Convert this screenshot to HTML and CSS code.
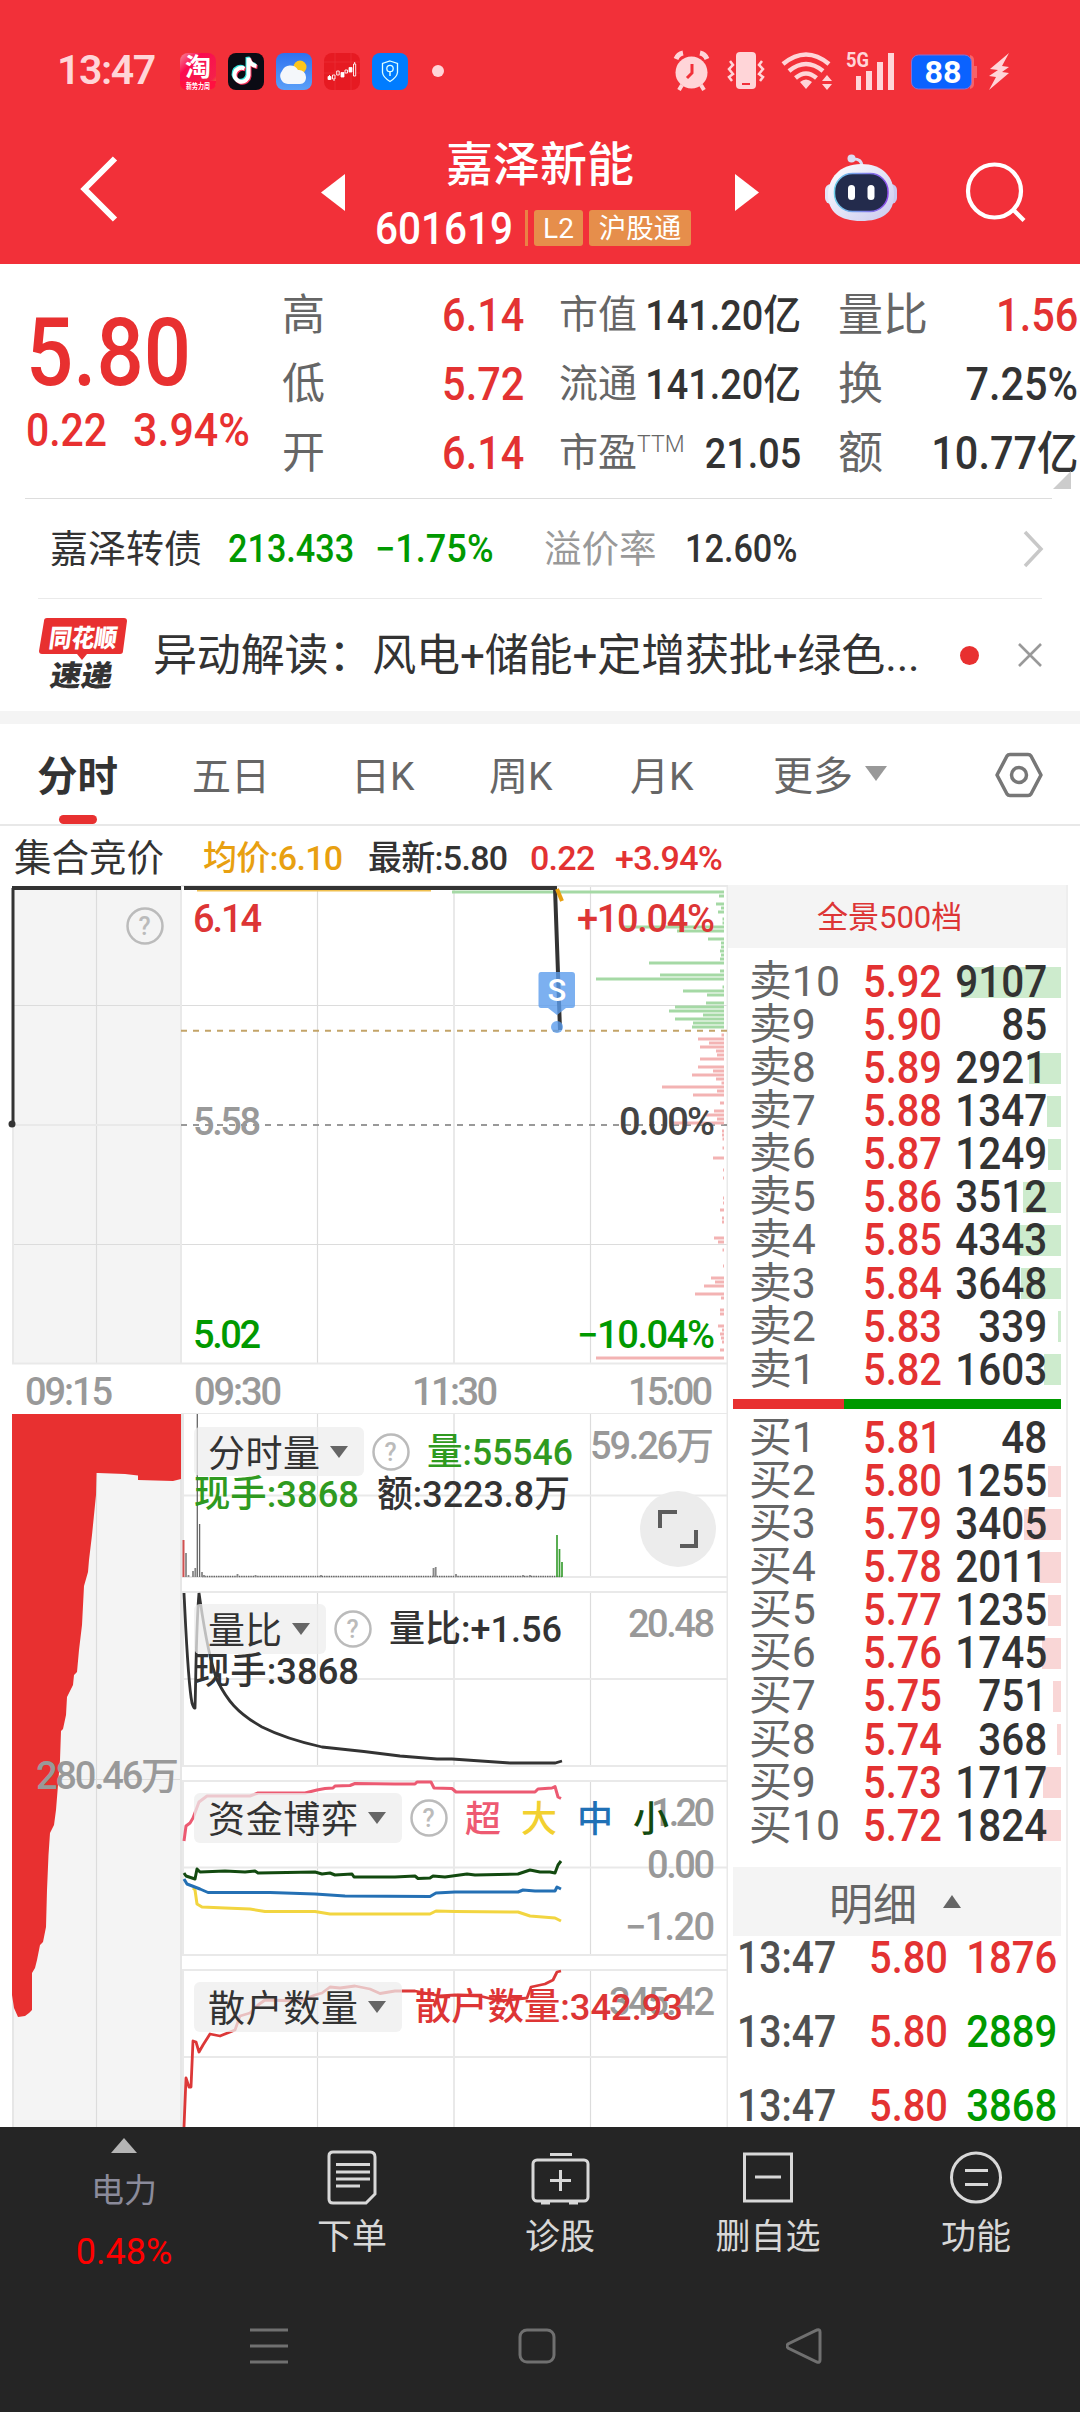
FILE: index.html
```html
<!DOCTYPE html>
<html lang="zh-CN">
<head>
<meta charset="utf-8">
<title>嘉泽新能 601619</title>
<link rel="stylesheet" href="styles.css">
</head>
<body>
<header class="top">
  <div class="status">
    <span class="clock">13:47</span>
    <div class="apps">
      <svg width="36" height="37" viewBox="0 0 36 37">
        <defs><linearGradient id="tb" x1="0" y1="0" x2="1" y2="1"><stop offset="0" stop-color="#f58a9a"/><stop offset=".3" stop-color="#fb0a50"/><stop offset=".8" stop-color="#f5204a"/><stop offset="1" stop-color="#e9a030"/></linearGradient></defs>
        <rect width="36" height="37" rx="8" fill="url(#tb)"/>
        <path d="M0 28h36v1q0 8-8 8H8q-8 0-8-8z" fill="#ff1040"/>
        <text x="5" y="23" font-size="25" font-weight="700" fill="#fff" textLength="26" lengthAdjust="spacingAndGlyphs">淘</text>
        <text x="6" y="35.500" font-size="8" font-weight="700" fill="#fff" textLength="24" lengthAdjust="spacingAndGlyphs">新势力周</text>
      </svg>
      <svg width="36" height="37" viewBox="0 0 36 37">
        <rect width="36" height="37" rx="8" fill="#0b0b14"/>
        <path d="M17.500 15.500a7 7 0 1 0 4 7V5c1 5 4 7.500 8 8" fill="none" stroke="#35e6e0" stroke-width="4" transform="translate(-2 -1)"/>
        <path d="M17.500 15.500a7 7 0 1 0 4 7V5c1 5 4 7.500 8 8" fill="none" stroke="#f8305a" stroke-width="4" transform="translate(0 1)"/>
        <path d="M17.500 15.500a7 7 0 1 0 4 7V5c1 5 4 7.500 8 8" fill="none" stroke="#fff" stroke-width="4" transform="translate(-1 0)"/>
      </svg>
      <svg width="36" height="37" viewBox="0 0 36 37">
        <defs><linearGradient id="sky" x1="0" y1="0" x2="0" y2="1"><stop offset="0" stop-color="#2f72f0"/><stop offset="1" stop-color="#5ba0f8"/></linearGradient></defs>
        <rect width="36" height="37" rx="8" fill="url(#sky)"/>
        <circle cx="24" cy="14" r="6.500" fill="#fdc51c"/>
        <path d="M12 31a8 8 0 0 1-6-13 9 9 0 0 1 16-1 7 7 0 0 1 8 7c0 4-2 7-6 7z" fill="#f4f7fb"/>
      </svg>
      <svg width="36" height="37" viewBox="0 0 36 37">
        <rect width="36" height="37" rx="8" fill="#e61a22"/>
        <path d="M11 0v37M27 0v37M0 9h36M0 20h36" stroke="#ea3236" stroke-width=".7"/>
        <path d="M4 23.500h3v3H4zM17 19.500h3v4.500h-3zM25 14.500h3v4.500h-3z" fill="#fff" stroke="#fff" stroke-width=".8"/>
        <path d="M8.500 22h2.500v4h-2.500zM12.700 18h2.500v4h-2.500zM21 17h2.500v3H21zM29.500 11h2.200v12h-2.200zM10 26.500v1.500M30.700 9v2M5.500 22v5" fill="none" stroke="#fff" stroke-width=".9"/>
      </svg>
      <svg width="36" height="37" viewBox="0 0 36 37">
        <rect width="36" height="37" rx="8" fill="#007cff"/>
        <path d="M18 8l7.500 2.500v9Q25 24 18 28.500 11 24 10.500 19.500v-9z" fill="none" stroke="#dff" stroke-width="1.300"/>
        <circle cx="18" cy="15.500" r="3.200" fill="none" stroke="#dff" stroke-width="1.300"/><path d="M18 19v4" stroke="#dff" stroke-width="1.500"/>
      </svg>
    </div>
    <i class="more-dot"></i>
    <svg class="sys" width="346" height="48" viewBox="670 48 346 48" fill="#ffd5d8">
      <circle cx="691.500" cy="73.500" r="16"/><path d="M682 86l-3 5M701 86l3 5" stroke="#ffd5d8" stroke-width="4"/>
      <path d="M676 60q2-5 7-6M707 60q-2-5-7-6" fill="none" stroke="#ffd5d8" stroke-width="5"/>
      <path d="M692 65v9l-5 5" fill="none" stroke="#f23039" stroke-width="3"/>
      <rect x="736" y="53" width="20" height="37" rx="4"/><path d="M742 85h8" stroke="#f23039" stroke-width="2"/>
      <path d="M730 62l3 4-4 4 4 5-4 3 3 4M762 62l-3 4 4 4-4 5 4 3-3 4" fill="none" stroke="#ffd5d8" stroke-width="2.500"/>
      <g fill="none" stroke="#ffd5d8" stroke-width="4.500"><path d="M783 65q23-19 46 0"/><path d="M789 72q17-14 34 0"/><path d="M795.500 79q10.500-9 21 0"/></g>
      <path d="M806 90l-6-7q6-5 12 0zM822 82l5-6 5 6zM822 85l5 6 5-6z"/>
      <text x="846" y="68" font-size="21" font-weight="700" textLength="23" lengthAdjust="spacingAndGlyphs">5G</text>
      <path d="M856 77h5v14h-5zM866 72h6v19h-6zM877 63h6v28h-6zM888 54h6v37h-6z"/>
      <path d="M970 56q4 1 4 5v6h3v12h-3v6q0 4-4 5z" fill="#f76268"/>
      <rect x="911.500" y="56" width="60" height="34" rx="7" fill="#0a62ff" stroke="#8a6fd0" stroke-width="1"/>
      <text x="924.500" y="84" font-size="31" font-weight="700" fill="#fff" textLength="37" lengthAdjust="spacingAndGlyphs">88</text>
      <path d="M1009 54l-19 16 8 1-9 6 7 1-7 13 20-17-7-1 7-5-7-1z"/>
    </svg>
  </div>
  <div class="nav">
    <svg class="back" width="38" height="68" viewBox="80 160 38 68"><path d="M115 163.500L84.500 194l30.500 30.500" fill="none" stroke="#fff" stroke-width="6"/></svg>
    <svg class="tri" width="24" height="37" viewBox="0 0 24 37"><path d="M24 0v37L0 18.500z" fill="#fff"/></svg>
    <div class="title">
      <h1>嘉泽新能</h1>
      <div class="code"><span class="num code-n">601619</span><i></i><b>L2</b><b class="hgt">沪股通</b></div>
    </div>
    <svg class="tri" width="24" height="37" viewBox="0 0 24 37"><path d="M0 0v37l24-18.500z" fill="#fff"/></svg>
    <svg class="robot" width="74" height="70" viewBox="824 159 74 70">
      <defs><linearGradient id="rb" x1="0" y1="0" x2="1" y2="1"><stop offset="0" stop-color="#fff"/><stop offset="1" stop-color="#c9c9ee"/></linearGradient><linearGradient id="rf" x1="0" y1="0" x2="1" y2="0"><stop offset="0" stop-color="#6fd0ea"/><stop offset="1" stop-color="#8a4ae8"/></linearGradient></defs>
      <path d="M852 165q10-1 10 8" fill="none" stroke="#dcdcf2" stroke-width="3"/><circle cx="851.500" cy="164.500" r="4" fill="#dcdcf2"/>
      <rect x="825" y="190" width="12" height="20" rx="6" fill="#e4e4f6"/><rect x="885" y="190" width="12" height="20" rx="6" fill="#c9c9ee"/>
      <path d="M861 170c22 0 33 13 33 31s-12 26-33 26-33-9-33-26 12-31 33-31z" fill="url(#rb)"/>
      <rect x="834.500" y="179.500" width="53.500" height="38" rx="18" fill="#232b4c" stroke="url(#rf)" stroke-width="1.500"/>
      <rect x="848" y="191" width="7" height="15" rx="3.500" fill="#fff"/><rect x="867.500" y="191" width="7" height="15" rx="3.500" fill="#fff"/>
    </svg>
    <svg class="search" width="62" height="64" viewBox="964 164 62 64" fill="none" stroke="#fff" stroke-width="4.200"><circle cx="994.500" cy="195" r="26.500"/><path d="M1013 213.500l11 11"/></svg>
  </div>
</header>

<section class="quote">
  <div class="price"><div class="num last">5.80</div><div class="chg"><span class="num">0.22</span><span class="num">3.94%</span></div></div>
  <dl class="c1">
    <dt>高</dt><dd class="num red">6.14</dd>
    <dt>低</dt><dd class="num red">5.72</dd>
    <dt>开</dt><dd class="num red">6.14</dd>
  </dl>
  <dl class="c2">
    <dt>市值</dt><dd class="num">141.20亿</dd>
    <dt>流通</dt><dd class="num">141.20亿</dd>
    <dt class="pe">市盈<sup>TTM</sup></dt><dd class="num">21.05</dd>
  </dl>
  <dl class="c3">
    <dt>量比</dt><dd class="num red">1.56</dd>
    <dt>换</dt><dd class="num">7.25%</dd>
    <dt>额</dt><dd class="num">10.77亿</dd>
  </dl>
  <i class="corner"></i>
</section>

<section class="bond">
  <span class="b-name">嘉泽转债</span><span class="num green b-px">213.433</span><span class="num green b-pc">−1.75%</span><span class="b-lab">溢价率</span><span class="num b-prem">12.60%</span>
  <svg width="22" height="40" viewBox="0 0 22 40"><path d="M2 3l16 17L2 37" fill="none" stroke="#c8c8c8" stroke-width="3.500"/></svg>
</section>

<section class="news">
  <svg class="logo" width="90" height="74" viewBox="38 616 90 74">
    <path d="M47 618h77q3 0 3 3l-4 30q0 3-3 3H87l-5 6-5-6H42q-3 0-3-3l5-30q0-3 3-3z" fill="#e83030"/>
    <text transform="translate(48 647) skewX(-8)" font-size="25" font-weight="900" fill="#fff" textLength="68" lengthAdjust="spacingAndGlyphs">同花顺</text>
    <text transform="translate(49 686) skewX(-10)" font-size="29" font-weight="900" fill="#333" textLength="62" lengthAdjust="spacingAndGlyphs">速递</text>
  </svg>
  <p>异动解读：风电+储能+定增获批+绿色...</p>
  <i class="dot"></i>
  <svg width="24" height="24" viewBox="0 0 24 24"><path d="M1 1l22 22M23 1L1 23" stroke="#999" stroke-width="2.600"/></svg>
</section>

<nav class="tabs">
  <span class="on">分时</span><span>五日</span><span>日K</span><span>周K</span><span>月K</span><span class="moretab">更多<i></i></span>
  <svg width="50" height="46" viewBox="993 751 50 46" fill="none" stroke="#777" stroke-width="3.500" stroke-linejoin="round"><path d="M996 774l10-19q1-1.500 3-1.500h18q2 0 3 1.500l10 19-10 19q-1 1.500-3 1.500h-18q-2 0-3-1.500z"/><circle cx="1018" cy="774" r="7.500"/></svg>
</nav>

<main class="board">
  <div class="charts">
    <div class="info"><span class="auc">集合竞价</span><span class="avg">均价:6.10</span><span class="new">最新:5.80</span><span class="red dv">0.22</span><span class="red">+3.94%</span></div>
    <svg class="g price-chart" width="728" height="529" viewBox="0 885 728 529">
      <path d="M12 886h169v478H12z" fill="#f4f4f4"/>
      <g fill="none" stroke="#dcdcdc" stroke-width="1.200"><path d="M96.500 886v477M317.500 886v477M590.500 886v477M12 1005.500h716M12 1244.500h716"/></g>
      <g fill="none" stroke="#e9e9e9" stroke-width="2"><path d="M13 886v477M181 886v477M454 886v477M12 1363.500h716M181 1414h547M12 1125h170M727.500 885v529M181 886h547"/></g>
      <path d="M197 890.500h234" stroke="#f0c050" stroke-width="2"/>
      <path d="M181 1030.700h547" stroke="#c3a468" stroke-width="2" stroke-dasharray="6 6"/>
      <path d="M181 1125h547" stroke="#999" stroke-width="2" stroke-dasharray="6 6"/>
      <path stroke="#a5d9a5" stroke-width="3.200" d="M452 892H724M719 896H724M716 904H724M721 908H724M718 912H724M722.500 919H724M722.500 923H724M624 927H724M677 931H724M708 939H724M721 943H724M721 947H724M720 951H724M721 955H724M720 959H724M649 963H724M720 971H724M660 975H724M596 979H724M722.500 987H724M683 991H724M707 995H724M706 1003H724M675 1007H724M669 1011H724M703 1015H724M675 1019H724M693 1023H724M692 1027H724"/>
      <path stroke="#f3b3b3" stroke-width="3.200" d="M721.500 1035H724M698 1039H724M709 1043H724M700 1047H724M716 1051H724M717 1055H724M700 1059H724M698 1067H724M713 1071H724M692 1075H724M716 1079H724M721.500 1083H724M662 1087H724M717 1091H724M693 1095H724M720 1103H724M714 1111H724M706 1115H724M717 1119H724M673 1123H724M722 1131H724M722 1135H724M722.500 1139H724M722.500 1148H724M713 1158H724M723 1170H724M723 1178H724M723 1198H724M723 1203H724M720 1210H724M722 1218H724M722 1222H724M714 1238H724M718 1242H724M722.500 1250H724M723 1266H724M711 1278H724M715 1282H724M704 1286H724M695 1294H724M721 1298H724M720 1310H724M720 1314H724M718 1326H724M722 1330H724M720 1334H724M721 1338H724M722 1342H724M720 1350H724M596 1358H724"/>
      <path d="M12 888h169M184 888h371l5 142" fill="none" stroke="#333" stroke-width="4"/>
      <path d="M13 888v236" stroke="#333" stroke-width="3"/><circle cx="12" cy="1124" r="3.500" fill="#333"/>
      <path d="M557 889l5 12" stroke="#e8a010" stroke-width="4"/>
      <g fill="#5b9cec" fill-opacity=".8"><path d="M541 972h31q3 0 3 3v30q0 3-3 3h-6l-9 7-9-7h-7q-2.500 0-2.500-3v-30q0-3 2.500-3z"/><circle cx="557" cy="1027" r="6"/></g>
      <text x="547.500" y="1001" font-size="31" fill="#fff">S</text>
      <circle cx="145" cy="926" r="17.500" fill="none" stroke="#bbb" stroke-width="2.500"/><text x="138.500" y="935" font-size="25" fill="#bbb">?</text>
      <g class="ax">
        <text x="193" y="932" textLength="69" fill="#dd3535">6.14</text><text x="193" y="1134.500" textLength="68" fill="#999">5.58</text><text x="193" y="1347.500" textLength="68" fill="#090">5.02</text>
        <text x="577" y="931.500" textLength="138" fill="#dd3535">+10.04%</text><text x="619" y="1134.500" textLength="96" fill="#444">0.00%</text><text x="577" y="1347.500" textLength="138" fill="#090">−10.04%</text>
        <g fill="#999"><text x="25" y="1404.500" textLength="88">09:15</text><text x="194" y="1404.500" textLength="88">09:30</text><text x="412" y="1404.500" textLength="86">11:30</text><text x="628" y="1404.500" textLength="85">15:00</text></g>
      </g>
    </svg>
    <div class="subs">
      <svg class="g" width="182" height="713" viewBox="0 1414 182 713">
        <path d="M12 1414h169v713H12z" fill="#f4f4f4"/>
        <path d="M96.500 1414v713M12 1779.500h169" stroke="#dcdcdc" stroke-width="1.200"/><path d="M13 1414v713M181 1414v713" stroke="#e6e6e6" stroke-width="2"/>
        <path d="M12 1414H181V1479L173 1481 138 1480V1475.500L125 1474 98 1473H96.500L96 1495 92 1535 89 1560 88 1572 84 1586 82 1625 79 1650 77 1672 74 1675 73 1685 67 1697 66 1715 63 1729 61 1731 60 1760 58 1785 56 1810 54 1825 50 1833 48.500 1855 47 1890 46 1927 43 1942 40 1945 37 1960 35 1968 32 1973V2010L29 2013 25 2016 18 2017 14 2008 12 1995Z" fill="#e83030"/>
        <text class="ax" x="36" y="1788.500" textLength="143" fill="#999">280.46万</text>
      </svg>
      <div class="stack">
      <svg class="g" width="546" height="177" viewBox="182 1414 546 177">
        <path d="M317.500 1414v163M590.500 1414v163" stroke="#dcdcdc" stroke-width="1.200"/><path d="M454 1414v163M183 1414v163M727.500 1414v177M182 1495.500h546M182 1577h546" stroke="#e9e9e9" stroke-width="2"/>
        <path d="M202 1576.500h360" stroke="#666" stroke-width="1.500" stroke-dasharray="1.500 .8"/>
        <path d="M183.500 1540v37" stroke="#d05050" stroke-width="2"/>
        <path d="M186 1553v24M188.500 1575v2M193 1571v6M195.300 1568v9M202 1572v5M204 1575v2M237.500 1574v3M255.500 1575v2M321 1575v2M433.500 1568v9M435.700 1567v10M456 1574v3M523 1575v2M530 1575v2" stroke="#888" stroke-width="1.800"/>
        <path d="M197.300 1414v163M199.600 1524v53" stroke="#666" stroke-width="1.300"/>
        <path d="M557 1535v42M559.500 1549v28M562 1562v15" stroke="#3da035" stroke-width="1.700"/>
        <rect class="pill" x="194" y="1427" width="170" height="49" rx="6"/><text class="lb" x="208" y="1467" textLength="112">分时量</text><path class="dn" d="M330 1446h18l-9 12z"/>
        <circle class="q" cx="391" cy="1452" r="17.500"/><text class="qt" x="384.500" y="1461">?</text>
        <text class="lb v grn" x="427" y="1465" textLength="146" lengthAdjust="spacingAndGlyphs">量:55546</text><text class="lb v grn" x="194" y="1507" textLength="165" lengthAdjust="spacingAndGlyphs">现手:3868</text><text class="lb v" x="377" y="1507" textLength="193" lengthAdjust="spacingAndGlyphs">额:3223.8万</text>
        <text class="ax" x="590" y="1459" textLength="124" fill="#999">59.26万</text>
        <circle cx="678" cy="1529" r="38" fill="#ececec"/><path d="M660 1528v-16h17M680 1546h16v-16" fill="none" stroke="#5c5c5c" stroke-width="4"/>
      </svg>
      <svg class="g" width="546" height="189" viewBox="182 1591 546 189">
        <path d="M317.500 1591v175M590.500 1591v175" stroke="#dcdcdc" stroke-width="1.200"/><path d="M454 1591v175M183 1591v175M727.500 1591v189M182 1592h546M182 1679h546M182 1766h546" stroke="#e9e9e9" stroke-width="2"/>
        <path d="M184 1593c2 40 4 90 8 110q2 6 3 5c1-30 1-80 4-115 3 20 8 60 18 87 10 20 20 33 45 47q24 12 60 20 40 4 78 9l37 3h15l58 4h45l7-2" fill="none" stroke="#333" stroke-width="2.800"/>
        <rect class="pill" x="194" y="1604" width="132" height="50" rx="6"/><text class="lb" x="208" y="1644" textLength="74">量比</text><path class="dn" d="M292 1623h18l-9 12z"/>
        <circle class="q" cx="353" cy="1629" r="17.500"/><text class="qt" x="346.500" y="1638">?</text>
        <text class="lb v" x="389" y="1642" textLength="173" lengthAdjust="spacingAndGlyphs">量比:+1.56</text><text class="lb v" x="194" y="1684" textLength="165" lengthAdjust="spacingAndGlyphs">现手:3868</text>
        <text class="ax" x="628" y="1636.500" textLength="87" fill="#999">20.48</text>
      </svg>
      <svg class="g" width="546" height="189" viewBox="182 1780 546 189">
        <path d="M317.500 1780v175M590.500 1780v175" stroke="#dcdcdc" stroke-width="1.200"/><path d="M454 1780v175M183 1780v175M727.500 1780v189M182 1781h546M182 1867.500h546M182 1955h546" stroke="#e9e9e9" stroke-width="2"/>
        <g class="ax" fill="#999"><text x="651" y="1825.500" textLength="64">1.20</text><text x="647" y="1877.500" textLength="68">0.00</text><text x="625" y="1939.500" textLength="90">−1.20</text></g>
        <g fill="none" stroke-width="3" stroke-linejoin="round">
          <path stroke="#ec5a72" d="M184 1841l2-15 4-3 3-5 6-16 8-6h43l8-3h47l12-3 8-1.500 8-.5 2-2 15-.5 5-2 40 .5h20l2-2h14l3 6 18 .5 4 3.500h79l3-3 14-1 3-1.500 3 10.500 3 1.500"/>
          <path stroke="#f2d540" d="M193 1888l2 2 2 14 5 3 23 1 25 1 15 2.500h50l15 2.500h100l6-3 19 .5 63 .5 12 4 25 2 6 3"/>
          <path stroke="#2470b4" d="M184 1879l3 5 13 5 8 3.500h62l45 1.500 30 2 85 .5 6-3.500 19-1h63l5-2 12 1h20l2-4 4 2"/>
          <path stroke="#134a10" d="M184 1873l2 3 9 3 2-10 3 3 25-1 20 1 10-1 3 2 57-1 7 2 8-1 5 2 17-1 2 3h41l20-1 3 2.500 12-.5 3-2 12 1 22-3 8 1 43-1 12-4 10 2h10l5 1 3-8 3-4"/>
        </g>
        <rect class="pill" x="194" y="1793" width="208" height="50" rx="6"/><text class="lb" x="208" y="1833" textLength="150">资金博弈</text><path class="dn" d="M368 1812h18l-9 12z"/>
        <circle class="q" cx="429" cy="1818" r="17.500"/><text class="qt" x="422.500" y="1827">?</text>
        <g class="cat"><text x="465" y="1831.500" fill="#ee5a72">超</text><text x="521" y="1831.500" fill="#f2d030">大</text><text x="577" y="1831.500" fill="#2070b5">中</text><text x="633" y="1831.500" fill="#134a10">小</text></g>
      </svg>
      <svg class="g" width="546" height="158" viewBox="182 1969 546 158">
        <path d="M317.500 1969v158M590.500 1969v158" stroke="#dcdcdc" stroke-width="1.200"/><path d="M454 1969v158M183 1969v158M727.500 1969v158M182 1970h546M182 2057h546" stroke="#e9e9e9" stroke-width="2"/>
        <path fill="none" stroke="#dc3838" stroke-width="2.800" stroke-linejoin="round" d="M184 2127l2-49 3 9h2l2-46 3 1 3 10 4-7 7-11 10 2 15-6 5-14 10-3 8-8 7-5 35 1 15-6 7-2 8-6 10 1 15-2 15 3 10 4.500 15-2.500h20l25 5 15-1 25 1 20 5 27-3 4-11 14-3 8-4 4-8 4-1"/>
        <text class="ax" x="609" y="2014.500" textLength="106" fill="#999">345.42</text>
        <rect class="pill" x="194" y="1982" width="208" height="50" rx="6"/><text class="lb" x="208" y="2022" textLength="150">散户数量</text><path class="dn" d="M368 2001h18l-9 12z"/>
        <text class="lb v retail" x="415" y="2020" textLength="268" lengthAdjust="spacingAndGlyphs">散户数量:342.93</text>
      </svg>
      </div>
    </div>
  </div>

  <aside class="book">
    <div class="full">全景500档</div>
    <ol class="sell">
      <li><span>卖10</span><b>5.92</b><i style="width:100px"></i><em>9107</em></li>
      <li><span>卖9</span><b>5.90</b><i style="width:0px"></i><em>85</em></li>
      <li><span>卖8</span><b>5.89</b><i style="width:32px"></i><em>2921</em></li>
      <li><span>卖7</span><b>5.88</b><i style="width:14px"></i><em>1347</em></li>
      <li><span>卖6</span><b>5.87</b><i style="width:13px"></i><em>1249</em></li>
      <li><span>卖5</span><b>5.86</b><i style="width:38px"></i><em>3512</em></li>
      <li><span>卖4</span><b>5.85</b><i style="width:47px"></i><em>4343</em></li>
      <li><span>卖3</span><b>5.84</b><i style="width:40px"></i><em>3648</em></li>
      <li><span>卖2</span><b>5.83</b><i style="width:3px"></i><em>339</em></li>
      <li><span>卖1</span><b>5.82</b><i style="width:17px"></i><em>1603</em></li>
    </ol>
    <div class="ratio"></div>
    <ol class="buy">
      <li><span>买1</span><b>5.81</b><i style="width:0px"></i><em>48</em></li>
      <li><span>买2</span><b>5.80</b><i style="width:13px"></i><em>1255</em></li>
      <li><span>买3</span><b>5.79</b><i style="width:37px"></i><em>3405</em></li>
      <li><span>买4</span><b>5.78</b><i style="width:22px"></i><em>2011</em></li>
      <li><span>买5</span><b>5.77</b><i style="width:13px"></i><em>1235</em></li>
      <li><span>买6</span><b>5.76</b><i style="width:19px"></i><em>1745</em></li>
      <li><span>买7</span><b>5.75</b><i style="width:8px"></i><em>751</em></li>
      <li><span>买8</span><b>5.74</b><i style="width:4px"></i><em>368</em></li>
      <li><span>买9</span><b>5.73</b><i style="width:18px"></i><em>1717</em></li>
      <li><span>买10</span><b>5.72</b><i style="width:20px"></i><em>1824</em></li>
    </ol>
    <div class="detail">明细<i></i></div>
    <ol class="ticks">
      <li><span>13:47</span><b>5.80</b><em class="up">1876</em></li>
      <li><span>13:47</span><b>5.80</b><em>2889</em></li>
      <li><span>13:47</span><b>5.80</b><em>3868</em></li>
    </ol>
  </aside>
</main>

<footer>
  <div class="acts">
    <div class="sector"><i></i><span>电力</span><strong>0.48%</strong></div>
    <div><svg width="60" height="56" viewBox="322 2149 60 56"><path d="M333 2152h37q5 0 5 5v37l-9 9h-33q-4 0-4-4v-43q0-4 4-4z"/><path d="M336 2164.500h34M336 2172h34M336 2179h34M336 2186h24"/></svg><span>下单</span></div>
    <div><svg width="60" height="56" viewBox="529 2149 60 56"><rect x="532" y="2160" width="55" height="41" rx="4"/><path d="M549 2154.500h22M559.500 2170v21M549 2180.500h21M540 2203h9M568 2203h9"/></svg><span>诊股</span></div>
    <div><svg width="60" height="56" viewBox="737 2149 60 56"><rect x="743.500" y="2154" width="47" height="47"/><path d="M754 2177h26"/></svg><span>删自选</span></div>
    <div><svg width="60" height="56" viewBox="945 2149 60 56"><circle cx="975" cy="2177.500" r="24.500"/><path d="M964 2170.500h23M964 2184.500h23"/></svg><span>功能</span></div>
  </div>
  <div class="sysnav">
    <svg width="38" height="36" viewBox="0 0 38 36"><path d="M0 2h38M0 18h38M0 34h38"/></svg>
    <svg width="38" height="36" viewBox="0 0 38 36"><rect x="2" y="2" width="34" height="32" rx="7"/></svg>
    <svg width="38" height="36" viewBox="2 0 38 36"><path d="M33 2q3-1 3 2v28q0 3-3 2L4 20q-2-2 0-4z"/></svg>
  </div>
</footer>
</body>
</html>
```
FILE: styles.css
```css
* { box-sizing: border-box; margin: 0; padding: 0; }
body { width: 1080px; height: 2412px; overflow: hidden; background: #fff; color: #333; font-family: Roboto, "Noto Sans CJK SC", sans-serif; }
svg { display: block; flex: none; }
i, em { font-style: normal; }
b { font-weight: 500; }
ol { list-style: none; }
span, p, h1, dt { white-space: nowrap; }

.num { display: block; font-weight: 500; transform: scaleX(.9); transform-origin: 0 50%; white-space: nowrap; }
.red { color: #e33232; }
.green { color: #090; }

.top { height: 264px; background: #f23039; color: #fff; }
.status { display: flex; align-items: center; height: 120px; padding: 22px 0 0 57px; }
.clock { width: 123px; margin-top: -2px; color: #ffd5d8; font-size: 41px; font-weight: 600; line-height: 48px; letter-spacing: -1.400px; }
.apps { display: flex; gap: 12px; }
.more-dot { width: 12px; height: 12px; margin: 0 226px 0 24px; border-radius: 50%; background: #ffd5d8; }
.nav { display: flex; align-items: center; height: 144px; }
.back { margin: -6px 203px 0 80px; }
.title { width: 390px; height: 144px; }
.title h1 { margin-top: 13px; height: 60px; font-size: 47px; font-weight: 500; line-height: 63px; text-align: center; }
.code { display: flex; align-items: center; height: 36px; margin-top: 17px; padding-left: 30px; line-height: 37px; }
.code-n { width: 150px; font-size: 45px; }
.code i { width: 3px; height: 36px; margin-right: 6px; background: #ea8145; }
.code b { width: 49px; height: 36px; border-radius: 3px; background: #e68e4b; font-size: 28px; font-weight: 400; text-align: center; }
.code .hgt { width: 102px; margin-left: 6px; font-size: 27.500px; }
.robot { margin: -8px 0 0 65px; }
.search { margin: 0 0 0 66px; }

.quote { display: flex; position: relative; height: 235px; padding-top: 16px; }
.quote::after { content: ""; position: absolute; left: 25px; right: 28px; bottom: 0; height: 1px; background: #ddd; }
.price { width: 282px; padding: 17px 0 0 26px; color: #e83030; }
.last { font-size: 94px; line-height: 112px; transform: scaleX(.885); }
.chg { display: flex; font-size: 47px; line-height: 46px; margin-top: -2px; }
.chg .num:first-child { width: 107px; transform: scaleX(.87); }
.chg .num:last-child { transform: scaleX(.915); }
.quote dl { display: grid; grid-template-columns: 90px minmax(0, 1fr); grid-auto-rows: 69px; line-height: 71px; }
.quote dt { color: #666; }
.quote dd { justify-self: end; transform-origin: 100% 50%; font-size: 46px; }
.c1 { width: 242px; font-size: 43px; }
.c2 { width: 242px; margin-left: 35px; font-size: 39px; }
.quote .c2 dd { font-size: 42px; }
.c2 sup { font-size: 23px; line-height: 0; font-weight: 300; }
.c3 { width: 240px; margin-left: 37px; font-size: 45px; }
.corner { position: absolute; right: 9px; bottom: 10px; width: 18px; height: 18px; background: #ccc; clip-path: polygon(100% 0, 100% 100%, 0 100%); }

.bond { display: flex; align-items: center; position: relative; height: 100px; padding-left: 50px; line-height: 97px; font-size: 38px; }
.bond::after { content: ""; position: absolute; left: 38px; right: 38px; bottom: 0; height: 1px; background: #eaeaea; }
.b-name { width: 178px; font-size: 38px; }
.b-px { width: 147px; }
.b-pc { width: 169px; }
.bond .b-pc { transform: scaleX(.95); }
.b-lab { width: 141px; color: #999; font-size: 37.500px; }
.b-prem { width: 338px; }

.news { display: flex; align-items: center; height: 112px; }
.news { padding-left: 38px; }
.news p { width: 806px; padding: 2px 0 0 25px; font-size: 44px; line-height: 60px; letter-spacing: -.15px; }
.logo { margin-top: -4px; }
.dot { width: 19px; height: 19px; margin: 0 39px 0 26px; border-radius: 50%; background: #e83030; }

.tabs { display: grid; grid-template-columns: 155px 159px 138px 141px 143px 221px auto; align-items: center; height: 115px; padding: 6px 0 0 37px; border-top: 13px solid #f4f4f4; border-bottom: 2px solid #e8e8e8; color: #666; font-size: 39px; line-height: 94px; }
.tabs .on { position: relative; color: #333; font-size: 40.500px; font-weight: 700; }
.on::after { content: ""; position: absolute; left: 22px; bottom: 0; width: 38px; height: 9px; border-radius: 5px; background: #e83030; }
.moretab { display: flex; align-items: center; gap: 12px; font-size: 40px; }
.moretab i { margin-top: -8px; border: solid transparent; border-width: 15px 11px 0; border-top-color: #999; }
.tabs svg { margin-top: -5px; }

.board { display: grid; grid-template-columns: 728px 340px; height: 1301px; overflow: hidden; }
.info { display: grid; grid-template-columns: 189px 165px 162px 85px auto; height: 59px; padding-left: 14px; line-height: 64px; font-size: 34px; font-weight: 500; letter-spacing: -.7px; }
.info .auc { font-size: 37.500px; font-weight: 400; letter-spacing: 0; }
.avg { color: #e8a010; }
.subs { display: flex; }
.g { overflow: hidden; }
.g text { font-weight: 500; }
.g .ax, .g .ax text { font-size: 38px; }
.pill { fill: #ededed; fill-opacity: .75; }
.g .lb { font-size: 37px; font-weight: 400; fill: #333; }
.g .v { font-weight: 500; }
.g .grn { fill: #2f9a20; }
.g .retail { fill: #dd3535; }
.dn { fill: #666; }
.q { fill: none; stroke: #bbb; stroke-width: 2.500; }
.qt { font-size: 25px; fill: #bbb; }
.cat { font-size: 36px; }

.book { height: 1242px; margin-top: 59px; border-right: 2px solid #eee; padding-right: 5px; font-size: 44px; }
.full { height: 63px; margin-right: -5px; background: #f4f4f4; color: #dd3535; font-size: 31px; line-height: 66px; padding-left: 89px; }
.book li { display: grid; grid-template-columns: 114px 78px 1fr; align-items: center; height: 43.080px; padding-left: 21px; line-height: 44px; }
.book li > * { grid-row: 1; }
.book li span { color: #666; font-size: 42px; transform: scaleX(1.02); transform-origin: 0 50%; }
.book b { color: #e33232; transform: scaleX(.905); transform-origin: 0 50%; }
.book li i { grid-column: 3; justify-self: end; height: 31px; }
.book em { grid-column: 3; padding-right: 15px; font-weight: 500; text-align: right; transform: scaleX(.92); transform-origin: 100% 50%; }
.sell { height: 451px; padding-top: 12px; }
.sell i { background: #cdebcd; }
.ratio { height: 10px; margin-left: 5px; background: linear-gradient(90deg, #e83030 111px, #090 111px); }
.buy { height: 458px; padding-top: 7px; }
.buy i { background: #f9d6d6; }
.detail { display: flex; align-items: center; gap: 26px; height: 69px; margin-left: 5px; padding-left: 96px; background: #f4f4f4; color: #666; font-size: 44px; }
.detail i { border: solid transparent; border-width: 0 9px 13px; border-bottom-color: #666; }
.ticks { padding-top: 0; }
.book .ticks li { grid-template-columns: 132px 80px 1fr; height: 43px; margin-bottom: 31px; padding-left: 9px; }
.book .ticks span { font-size: 44px; font-weight: 500; color: #505050; transform: scaleX(.89); }
.book .ticks em { padding-right: 4px; color: #090; transform: scaleX(.91); }
.book .ticks .up { color: #e33232; }

footer { height: 285px; background: #252525; color: #d8d8d8; }
.acts { display: grid; grid-template-columns: 248px repeat(4, 208px); height: 184px; text-align: center; }
.acts div { display: flex; flex-direction: column; align-items: center; padding-top: 22px; font-size: 35px; line-height: 50px; }
.acts span { padding-top: 8px; }
.acts svg { fill: none; stroke: #d8d8d8; stroke-width: 3; }
.acts .sector { padding-top: 11px; }
.sector i { border: solid transparent; border-width: 0 13px 15px; border-bottom-color: #b5b5b5; }
.acts .sector span { padding-top: 13px; color: #8b8b9b; font-size: 33px; }
.sector strong { padding-top: 11px; color: #f00; font-size: 36px; font-weight: 400; }
.sysnav { display: flex; gap: 230px; padding: 17px 0 0 250px; }
.sysnav svg { fill: none; stroke: #707070; stroke-width: 3; }
```
